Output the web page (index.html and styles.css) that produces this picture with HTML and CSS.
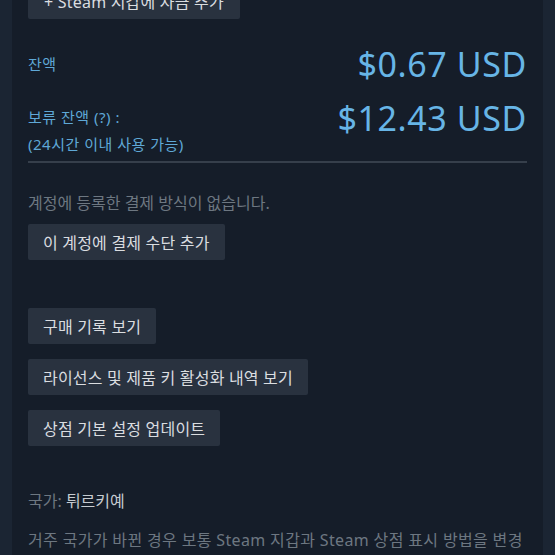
FILE: index.html
```
<!DOCTYPE html>
<html lang="ko">
<head>
    <meta charset="UTF-8">
    <meta name="viewport" content="width=device-width, initial-scale=1.0">
    <title>Steam 계정 정보</title>
    <link rel="stylesheet" href="styles.css">
</head>
<body>
    <main class="panel">
        <button class="button button-top" type="button">+ Steam 지갑에 자금 추가</button>

        <div class="balance-row">
            <div class="balance-label">잔액</div>
            <div class="balance-amount">$0.67 USD</div>
        </div>

        <div class="balance-row pending">
            <div class="balance-label">
                <div>보류 잔액 (?) :</div>
                <div>(24시간 이내 사용 가능)</div>
            </div>
            <div class="balance-amount">$12.43 USD</div>
        </div>

        <hr class="divider">

        <p class="note">계정에 등록한 결제 방식이 없습니다.</p>
        <button class="button" type="button">이 계정에 결제 수단 추가</button>

        <div class="actions">
            <button class="button" type="button">구매 기록 보기</button>
            <button class="button" type="button">라이선스 및 제품 키 활성화 내역 보기</button>
            <button class="button" type="button">상점 기본 설정 업데이트</button>
        </div>

        <p class="country">국가: <span>튀르키예</span></p>
        <p class="note country-note">거주 국가가 바뀐 경우 보통 Steam 지갑과 Steam 상점 표시 방법을 변경하게 됩니다.</p>
    </main>
</body>
</html>
```

FILE: styles.css
```
* {
    box-sizing: border-box;
}

html,
body {
    margin: 0;
    padding: 0;
}

body {
    background-color: #1b2533;
    font-family: "Noto Sans", "Noto Sans CJK KR", sans-serif;
    font-size: 16px;
    height: 555px;
    overflow: hidden;
}

.panel {
    margin: 0 12px;
    padding: 0 16px;
    background-color: #151d29;
    height: 555px;
    overflow: hidden;
}

.button {
    display: block;
    height: 36px;
    padding: 0 15px;
    border: none;
    border-radius: 2px;
    background-color: #29323f;
    color: #dadde0;
    font-family: inherit;
    font-size: 16px;
    letter-spacing: 0.2px;
    cursor: pointer;
}

.button-top {
    margin-top: -17px;
    width: 212px;
}

.balance-row {
    display: flex;
    justify-content: space-between;
    align-items: center;
    margin-top: 25px;
    height: 40px;
}

.balance-row.pending {
    margin-top: 14px;
    align-items: flex-start;
    height: auto;
}

.balance-label {
    color: #5fa8d6;
    font-size: 15px;
    line-height: 27px;
    letter-spacing: 0.5px;
}

.pending .balance-label {
    padding-top: 6px;
}

.balance-amount {
    color: #67b5e6;
    font-size: 34px;
    line-height: 40px;
    letter-spacing: 0.6px;
}

.divider {
    margin: 3px 0 0;
    border: none;
    border-top: 2px solid #363f4b;
}

.note {
    color: #6d7781;
    margin: 30px 0 11px;
    line-height: 20px;
}

.actions {
    display: flex;
    flex-direction: column;
    align-items: flex-start;
    gap: 15px;
    margin-top: 48px;
}

.country {
    color: #6d7781;
    margin: 45px 0 0;
    line-height: 20px;
}

.country span {
    color: #c6cbd0;
}

.country-note {
    letter-spacing: 0.35px;
    line-height: 26px;
    margin-top: 16px;
}
```
